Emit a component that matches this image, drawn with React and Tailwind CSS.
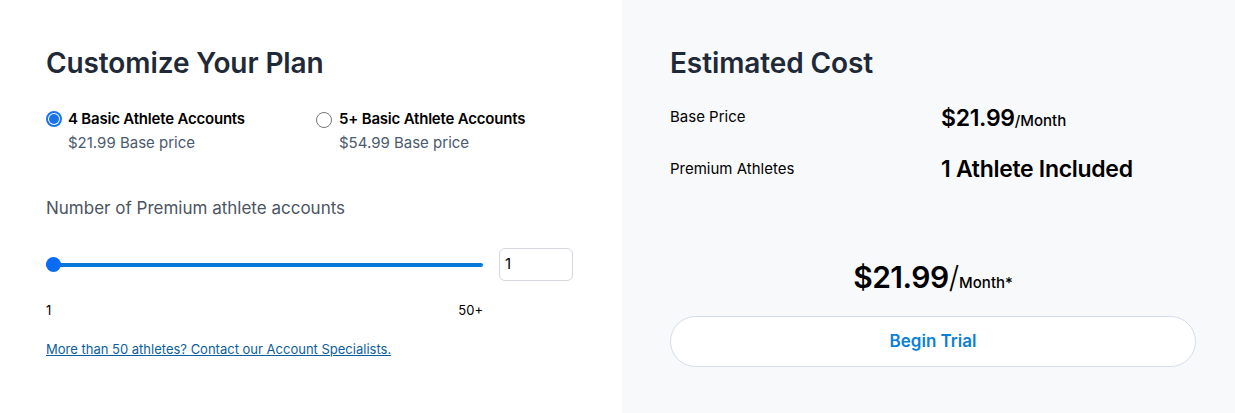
export default function App() {
  return (
    <div className="flex w-[1235px] h-[413px] font-['Inter',sans-serif] bg-white">
      {/* left: plan options */}
      <section className="w-[622px] pl-[46px] pt-[46px] pr-[48px]">
        <h2 className="text-[28px] leading-[34px] font-semibold text-[#1f2937] tracking-[-0.1px]">Customize Your Plan</h2>

        <div className="flex mt-[28px]">
          <label className="flex items-start gap-[6px] w-[270px]">
            <span className="mt-[3px] w-[16px] h-[16px] rounded-full border-2 border-[#1a73e8] flex items-center justify-center">
              <span className="w-[10px] h-[10px] rounded-full bg-[#1a73e8]" />
            </span>
            <span className="flex flex-col">
              <span className="text-[15px] leading-[22px] font-semibold text-black tracking-[-0.2px]">4 Basic Athlete Accounts</span>
              <span className="text-[15px] leading-[22px] text-[#4b5a6e] mt-[2px]">$21.99 Base price</span>
            </span>
          </label>
          <label className="flex items-start gap-[7px]">
            <span className="mt-[4px] w-[16px] h-[16px] rounded-full border border-[#777]" />
            <span className="flex flex-col">
              <span className="text-[15px] leading-[22px] font-semibold text-black tracking-[-0.2px]">5+ Basic Athlete Accounts</span>
              <span className="text-[15px] leading-[22px] text-[#4b5a6e] mt-[2px]">$54.99 Base price</span>
            </span>
          </label>
        </div>

        <div className="mt-[42px] text-[17px] leading-[24px] text-[#4b5563]">Number of Premium athlete accounts</div>

        <div className="flex items-center mt-[28px]">
          <div className="relative w-[437px] h-[4px] rounded-full bg-[#0a78d8]">
            <span className="absolute left-0 top-[-6px] w-[15px] h-[15px] rounded-full bg-[#0a6cf5]" />
          </div>
          <div className="ml-[16px] w-[74px] h-[33px] rounded-[6px] border border-[#d4d7dd] bg-white flex items-center px-[5px] text-[15px] text-black">1</div>
        </div>

        <div className="flex justify-between w-[437px] mt-[20px] text-[13px] leading-[18px] text-black">
          <span>1</span>
          <span>50+</span>
        </div>

        <a href="#" className="block mt-[21px] text-[13px] leading-[18px] text-[#0b5e9e] underline">
          More than 50 athletes? Contact our Account Specialists.
        </a>
      </section>

      {/* right: estimate */}
      <section className="flex-1 bg-[#f8f9fb] pl-[48px] pr-[39px] pt-[46px]">
        <h2 className="text-[28px] leading-[34px] font-semibold text-[#1f2937] tracking-[-0.1px]">Estimated Cost</h2>

        <div className="flex items-center mt-[19px]">
          <span className="w-[271px] text-[15px] text-black">Base Price</span>
          <span className="flex items-baseline mt-[2px]">
            <span className="text-[23px] font-semibold text-black tracking-[-0.3px]">$21.99</span>
            <span className="text-[15px] font-medium text-black">/Month</span>
          </span>
        </div>
        <div className="flex items-center mt-[16px]">
          <span className="w-[271px] text-[15px] text-black">Premium Athletes</span>
          <span className="text-[23px] font-semibold text-black tracking-[-0.3px]">1 Athlete Included</span>
        </div>

        <div className="flex justify-center items-baseline mt-[69px] text-black">
          <span className="text-[30px] font-semibold tracking-[-0.5px]">$21.99</span>
          <span className="text-[30px] font-light">/</span>
          <span className="text-[15px] font-medium">Month*</span>
        </div>

        <button className="w-full h-[51px] mt-[16px] rounded-full border border-[#d5dce8] bg-white text-[17px] font-semibold text-[#0b7fd9]">
          Begin Trial
        </button>
      </section>
    </div>
  )
}
